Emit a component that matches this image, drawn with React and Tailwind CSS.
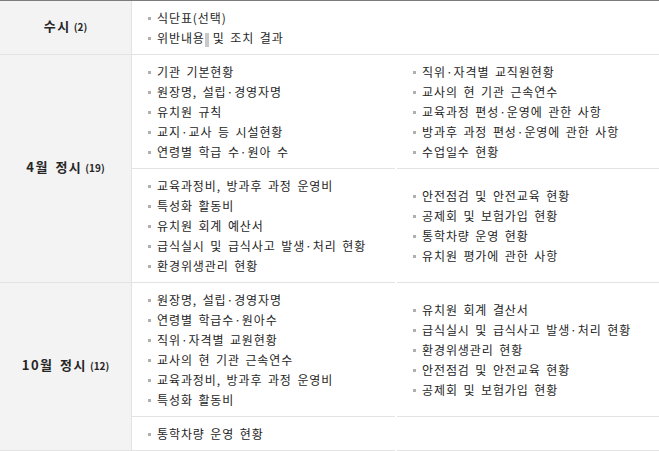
import React from 'react';

const groups = [
  {
    label: '수시',
    count: '(2)',
    rows: [
      { left: ['식단표(선택)', 'GAP'], right: null, full: true },
    ],
  },
  {
    label: '4월 정시',
    count: '(19)',
    rows: [
      {
        left: ['기관 기본현황', '원장명, 설립·경영자명', '유치원 규칙', '교지·교사 등 시설현황', '연령별 학급 수·원아 수'],
        right: ['직위·자격별 교직원현황', '교사의 현 기관 근속연수', '교육과정 편성·운영에 관한 사항', '방과후 과정 편성·운영에 관한 사항', '수업일수 현황'],
      },
      {
        left: ['교육과정비, 방과후 과정 운영비', '특성화 활동비', '유치원 회계 예산서', '급식실시 및 급식사고 발생·처리 현황', '환경위생관리 현황'],
        right: ['안전점검 및 안전교육 현황', '공제회 및 보험가입 현황', '통학차량 운영 현황', '유치원 평가에 관한 사항'],
      },
    ],
  },
  {
    label: '10월 정시',
    count: '(12)',
    rows: [
      {
        left: ['원장명, 설립·경영자명', '연령별 학급수·원아수', '직위·자격별 교원현황', '교사의 현 기관 근속연수', '교육과정비, 방과후 과정 운영비', '특성화 활동비'],
        right: ['유치원 회계 결산서', '급식실시 및 급식사고 발생·처리 현황', '환경위생관리 현황', '안전점검 및 안전교육 현황', '공제회 및 보험가입 현황'],
      },
      { left: ['통학차량 운영 현황'], right: [] },
    ],
  },
];

const Item = ({ text }) => (
  <li className="flex items-center h-[20px] whitespace-nowrap">
    <span className="w-[3px] h-[3px] bg-[#b0b0b0] mr-[6px] mt-[1px] shrink-0" />
    {text === 'GAP' ? (
      <span>
        위반내용<span className="inline-block w-[4px] h-[14px] align-middle bg-[#c8c8c8] mr-[4px]" />및 조치 결과
      </span>
    ) : (
      <span>{text}</span>
    )}
  </li>
);

const List = ({ items }) => (
  <ul className="flex flex-col">
    {items.map((t, i) => (
      <Item key={i} text={t} />
    ))}
  </ul>
);

export default function App() {
  return (
    <div
      className="w-[659px] h-[451px] bg-white border-t border-[#7c7c7c] text-[12px] text-[#262626] tracking-[0.9px] [word-spacing:2px] overflow-hidden"
      style={{ fontFamily: '"Noto Sans CJK KR", "Noto Sans", sans-serif' }}
    >
      {groups.map((g) => (
        <div key={g.label} className="flex">
          <div className="w-[132px] shrink-0 bg-[#f3f3f3] border-r border-b border-[#e3e3e3] flex items-center justify-center font-bold pb-[3px]">
            <span className="text-[13px] tracking-[1.5px]">{g.label}</span>
            <span className="text-[10px] ml-[3px] tracking-normal">{g.count}</span>
          </div>
          <div className="flex-1 flex flex-col">
            {g.rows.map((r, i) =>
              r.full ? (
                <div key={i} className="border-b border-[#e3e3e3] pt-[7px] pb-[6px] pl-[16px]">
                  <List items={r.left} />
                </div>
              ) : (
                <div key={i} className="flex gap-[2px]">
                  <div className="w-[263px] shrink-0 border-b border-[#e3e3e3] pt-[7px] pb-[6px] pl-[16px]">
                    <List items={r.left} />
                  </div>
                  <div className="flex-1 border-b border-[#e3e3e3] flex items-center pl-[16px]">
                    <List items={r.right} />
                  </div>
                </div>
              )
            )}
          </div>
        </div>
      ))}
    </div>
  );
}
